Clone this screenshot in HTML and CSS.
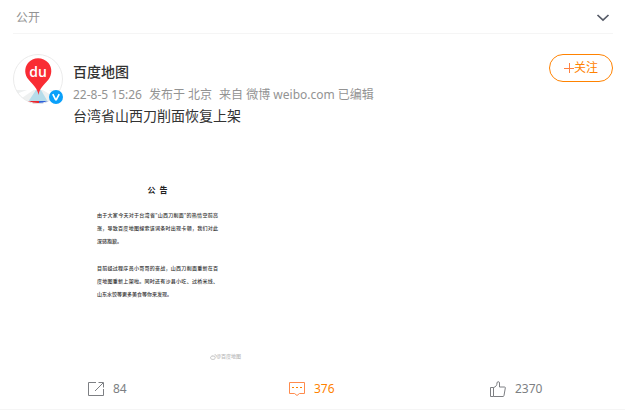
FILE: index.html
```html
<!DOCTYPE html>
<html lang="zh-CN">
<head>
  <meta charset="UTF-8">
  <meta name="viewport" content="width=device-width, initial-scale=1.0">
  <title>微博</title>
  <link rel="stylesheet" href="styles.css">
</head>
<body>
  <article class="card">
    <div class="top">
      <span>公开</span>
      <button class="more" type="button" aria-label="更多">
        <svg width="14" height="8" viewBox="0 0 14 8"><path d="M1.5 1L7 6.2L12.5 1" fill="none" stroke="#555a66" stroke-width="1.7"/></svg>
      </button>
    </div>

    <div class="main">
      <a class="avatar" href="#" aria-label="百度地图">
        <svg class="face" width="50" height="50" viewBox="0 0 50 50">
          <defs><clipPath id="round"><circle cx="25" cy="25" r="24.5"/></clipPath></defs>
          <circle cx="25" cy="25" r="24.5" fill="#fff"/>
          <g clip-path="url(#round)">
            <path d="M0 36H50V50H0Z" fill="#eef0f0"/>
            <path d="M0 41L17 35H22L6 46Z" fill="#fff"/>
            <path d="M28 35H34L50 44V48Z" fill="#fff"/>
            <path d="M23 36H28L35 48H15Z" fill="#b5dcea"/>
            <path d="M15 47H26V50H15Z" fill="#e8262d"/>
            <path d="M26 47H35V50H26Z" fill="#2f62d9"/>
          </g>
          <path d="M25.5 41C24.5 34 20 31 15.5 25.5C11.5 21 11 14 15 9C20 2.5 30 2.5 35.5 9C39.5 14 39 21 35.5 25.5C31 31 26.5 34 25.5 41Z" fill="#f92c33"/>
          <text class="du" x="25" y="23" text-anchor="middle">du</text>
          <circle cx="25" cy="25" r="24.5" fill="none" stroke="#ebebeb"/>
        </svg>
        <svg class="badge" width="14" height="14" viewBox="0 0 14 14">
          <circle cx="7" cy="7" r="7" fill="#0aa0fa"/>
          <path d="M3.8 4.2L6.6 9.6H7.3L10.2 4.2" fill="none" stroke="#fff" stroke-width="1.7"/>
        </svg>
      </a>

      <div class="content">
        <div class="head">
          <div class="info">
            <a class="name" href="#">百度地图</a>
            <div class="from">
              <a href="#">22-8-5 15:26</a>
              <span>发布于 北京</span>
              <span>来自 <a href="#">微博 weibo.com</a> 已编辑</span>
            </div>
          </div>
          <button class="follow" type="button">
            <svg width="10" height="10" viewBox="0 0 10 10"><path d="M0 5.5H10M5.5 0V10" stroke="#ff8140"/></svg>关注
          </button>
        </div>
        <p class="text">台湾省山西刀削面恢复上架</p>

        <div class="notice">
          <h2>公&ensp;告</h2>
          <p>
            <span>由于大家今天对于台湾省"山西刀削面"的热情空前高</span>
            <span>涨，导致百度地图搜索该词条时出现卡顿，我们对此</span>
            <span class="end">深感抱歉。</span>
          </p>
          <p>
            <span>目前经过程序员小哥哥的奋战，山西刀削面重新在百</span>
            <span>度地图重新上架啦。同时还有沙县小吃、过桥米线、</span>
            <span class="end">山东水饺等更多美食等你来发现。</span>
          </p>
          <div class="mark">
            <svg width="7" height="6" viewBox="0 0 12 10"><path d="M5 3C2 3 1 5 1 6.5C1 10 9 10 9 6.5C9 5 8 5 8 4C8 3 6 3 5 4ZM8 1C10 1 11 2 11 4" fill="none" stroke="#bbb" stroke-width="1.5"/></svg>@百度地图
          </div>
        </div>
      </div>
    </div>

    <div class="bar">
      <button type="button" aria-label="转发 84">
        <svg width="16" height="14" viewBox="0 0 16 14"><path d="M8 .5H.5V13.5H15.5V7M7 9L15 1M10.5 .5H15.5V5.5" fill="none" stroke="#7d7f83"/></svg>
        <span>84</span>
      </button>
      <button class="on" type="button" aria-label="评论 376">
        <svg width="16" height="14" viewBox="0 0 16 14"><path d="M.5 .5H15.5V11.5H10.5L8 13.5L5.5 11.5H.5Z" fill="none" stroke="#ff8b4d"/><path d="M3 5.5H5M7 5.5H9M11 5.5H13" stroke="#ff8200"/></svg>
        <span>376</span>
      </button>
      <button type="button" aria-label="赞 2370">
        <svg width="16" height="16" viewBox="0 0 16 16"><path d="M.5 6.5H3.5V15.5H.5ZM3.5 6.5C6 6 7 4 7 2C7 .2 9.5 .2 9.5 2V6H14.5Q15.5 6 15.3 7L14 14.5Q13.8 15.5 13 15.5H3.5" fill="none" stroke="#7d7f83"/></svg>
        <span>2370</span>
      </button>
    </div>
  </article>
</body>
</html>
```

FILE: styles.css
```css
*{
  margin: 0;
  padding: 0;
  box-sizing: border-box;
}
body{
  font: 12px/16px "Noto Sans", "Noto Sans CJK SC", sans-serif;
  color: #939393;
  background: #fff;
}
a{
  color: inherit;
  text-decoration: none;
}
button{
  font: inherit;
  color: inherit;
  border: 0;
  background: none;
  cursor: pointer;
}
svg{
  display: block;
  flex: none;
}

.card{
  border-bottom: 1px solid #f5f5f5;
}

.top{
  display: flex;
  justify-content: space-between;
  align-items: center;
  height: 34px;
  margin: 0 12px 0 13px;
  padding: 3px 3px 0;
  border-bottom: 1px solid #f5f5f5;
}

.main{
  display: flex;
  gap: 10px;
  padding: 20px 12px 0 13px;
}
.avatar{
  position: relative;
  width: 50px;
  height: 50px;
}
.du{
  font: 600 14px "Open Sans", sans-serif;
  fill: #fff;
}
.badge{
  position: absolute;
  right: 0;
  bottom: 0;
}

.content{
  flex: 1;
}
.head{
  display: flex;
  justify-content: space-between;
  align-items: flex-start;
}
.info{
  padding-top: 8px;
}
.name{
  display: block;
  font-size: 14px;
  font-weight: 500;
  line-height: 20px;
  color: #333;
}
.from{
  display: flex;
  gap: 7px;
  margin-top: 5px;
}
.follow{
  display: flex;
  align-items: center;
  justify-content: center;
  width: 64px;
  height: 28px;
  color: #ff8200;
  border: 1px solid #ff8200;
  border-radius: 14px;
}
.text{
  padding-top: 3px;
  font-size: 14px;
  line-height: 20px;
  color: #333;
}

.notice{
  width: 168px;
  margin-top: 59px;
  padding-left: 24px;
  font-size: 5px;
  font-weight: 500;
  line-height: 13px;
  color: #333;
}
.notice h2{
  width: 121px;
  font-size: 8px;
  line-height: 10px;
  text-align: center;
  color: #222;
}
.notice p{
  width: 121px;
  margin-top: 14px;
}
.notice span{
  display: block;
  white-space: nowrap;
  text-align-last: justify;
}
.notice .end{
  text-align-last: left;
}
.mark{
  display: flex;
  justify-content: flex-end;
  align-items: center;
  margin-top: 49px;
  color: #bbb;
}

.bar{
  display: grid;
  grid-template-columns: repeat(3, 1fr);
  height: 40px;
  margin-top: 6px;
  padding: 0 8px 0 14px;
}
.bar button{
  display: flex;
  align-items: center;
  justify-content: center;
  gap: 9px;
  color: #7d7f83;
}
.bar span{
  min-width: 28px;
  text-align: left;
}
.bar .on{
  color: #ff8200;
}
```
